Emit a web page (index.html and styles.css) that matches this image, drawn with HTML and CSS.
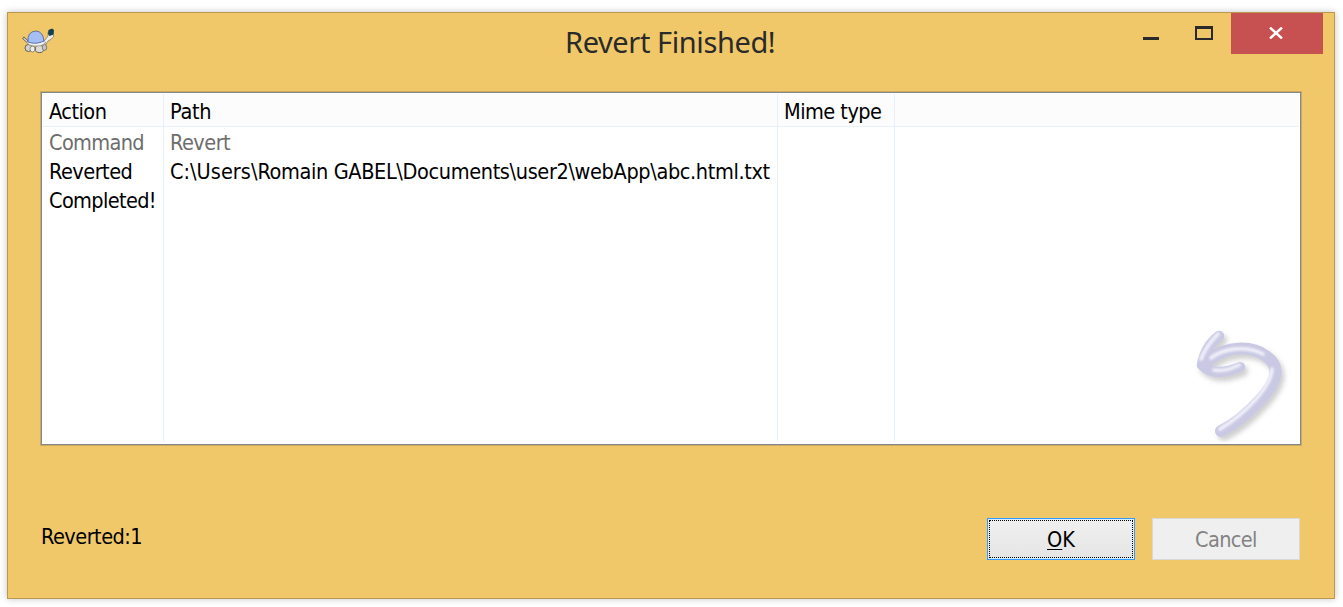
FILE: index.html
```html
<!DOCTYPE html>
<html lang="en">
<head>
<meta charset="utf-8">
<title>Revert Finished!</title>
<link rel="stylesheet" href="styles.css">
</head>
<body>
<main class="window">
  <header class="titlebar">
    <svg class="app-icon" width="34" height="28" viewBox="0 0 34 28">
      <path d="M1 10.500 L7 16" fill="none" stroke="#55524c" stroke-width="2.600"/>
      <path d="M1.500 11 L7 16" fill="none" stroke="#e2e0dc" stroke-width="1.200"/>
      <path d="M20 16 L23 13 L26 9 L26 5 Q29 2 31 4 L31.500 10 L28 13 L26 14 L23 19Z" fill="#ecebe8" stroke="#77736a" stroke-width=".7"/>
      <path d="M26.500 3 L30 1.500 L32 3 L31.500 7.500 L27.500 9 L26 7Z" fill="#153f50"/>
      <ellipse cx="6.500" cy="21" rx="3.500" ry="3.500" fill="#d2d1ce" stroke="#55524c" stroke-width=".9"/>
      <ellipse cx="10.500" cy="22" rx="2.500" ry="3" fill="#f0efec" stroke="#77736a" stroke-width=".8"/>
      <ellipse cx="17.500" cy="22" rx="4.200" ry="3.600" fill="#dddbd7" stroke="#55524c" stroke-width=".9"/>
      <ellipse cx="22.500" cy="20.500" rx="2.200" ry="3" fill="#c6c5c2" stroke="#66635d" stroke-width=".8"/>
      <path d="M4.500 15 Q7 19 12 19 Q19 20 24 16 L21 14 L6 14Z" fill="#f3f2ee" stroke="#77736a" stroke-width=".6"/>
      <path d="M6 15 Q5 4.500 14 4 Q21 4.500 22 14 Q14 18 6 15Z" fill="#a5bef6" stroke="#52699b" stroke-width=".9"/>
    </svg>
    <h1 class="title">Revert Finished!</h1>
    <div class="controls">
      <svg class="control minimize" width="16" height="3"><rect width="16" height="3" fill="#2a2a2a"/></svg>
      <svg class="control maximize" width="18" height="14"><path fill="#2a2a2a" fill-rule="evenodd" d="M0 0H18V14H0ZM2 3V12H16V3Z"/></svg>
      <div class="close"><svg width="14" height="12" viewBox="0 0 14 12"><path d="M1 .5L13 11.500M13 .5L1 11.500" stroke="#fff" stroke-width="2.400"/></svg></div>
    </div>
  </header>
  <section class="list">
    <div class="column">
      <div class="heading"><span class="snug">Action</span></div>
      <div class="cell muted"><span class="tight">Command</span></div>
      <div class="cell"><span class="snug">Reverted</span></div>
      <div class="cell"><span class="tight">Completed!</span></div>
    </div>
    <div class="column">
      <div class="heading">Path</div>
      <div class="cell muted"><span class="snug">Revert</span></div>
      <div class="cell path"><span class="drive">C:\Users\</span>Romain GABEL\Documents\user2\webApp\abc.html.txt</div>
    </div>
    <div class="column"><div class="heading"><span class="snug">Mime type</span></div></div>
    <div class="column rest">
      <div class="heading"></div>
      <svg class="watermark" width="106" height="118" viewBox="0 0 106 118">
        <defs>
          <filter id="shadow" x="-20%" y="-20%" width="150%" height="150%"><feDropShadow dx="3" dy="4" stdDeviation="2.500" flood-color="#777" flood-opacity=".35"/></filter>
          <filter id="soft" x="-20%" y="-20%" width="150%" height="150%"><feGaussianBlur stdDeviation="1.300"/></filter>
        </defs>
        <g fill="none" stroke-linecap="round" stroke-linejoin="round">
          <g stroke="#c9c9e4" filter="url(#shadow)">
            <path d="M28 12Q14 23 11 41Q23 54 49 43" stroke-width="10.500"/>
            <path d="M13 41C30 21 60 21 75 32C92 44 84 60 69 76Q50 97 30 107" stroke-width="12"/>
          </g>
          <g stroke="#f1f1fa" stroke-width="3.600" filter="url(#soft)">
            <path d="M27 10Q15 22 10 35M23 46Q34 48 48 41"/>
            <path d="M20 34C34 23 56 22 72 30M81 45Q81 56 66 74Q48 94 29 105"/>
          </g>
        </g>
      </svg>
    </div>
  </section>
  <footer class="footer">
    <span class="status snug">Reverted:1</span>
    <button class="button ok"><span class="focus"><u>O</u>K</span></button>
    <button class="button cancel tight" disabled>Cancel</button>
  </footer>
</main>
</body>
</html>
```
FILE: styles.css
```css
* { box-sizing: border-box; }
body {
  margin: 0;
  padding: 12px 8px 8px 7px;
  height: 607px;
  overflow: hidden;
  background: #fff;
  color: #000;
  font: 21.500px/29px "DejaVu Sans Condensed", "DejaVu Sans", sans-serif;
  font-stretch: condensed;
  letter-spacing: -.3px;
}
.snug { letter-spacing: -.52px; }
.tight { letter-spacing: -.63px; }
.path { letter-spacing: -.36px; }
.drive { letter-spacing: .02px; }
.window {
  width: 1328px;
  height: 587px;
  border: 1px solid #b9994f;
  background: #f0c869;
  box-shadow: 0 0 7px rgba(0, 0, 0, .23);
  display: flex;
  flex-direction: column;
}
.titlebar {
  height: 78px;
  display: flex;
  padding: 0 11px 0 14px;
}
.app-icon { margin-top: 14px; flex: none; }
.title {
  margin: 9px auto 0 509px;
  font: 400 29px/40px "Noto Sans", sans-serif;
  letter-spacing: -.4px;
  color: #2a2a2a;
  white-space: nowrap;
}
.controls { display: flex; width: 180px; }
.control { flex: none; }
.minimize { margin: 24px 36px 0 0; }
.maximize { margin: 13px 18px 0 0; }
.close {
  width: 92px;
  height: 41px;
  background: #c75050;
  display: flex;
  justify-content: center;
  padding: 14px 2px 0 0;
}
.list {
  margin: 0 32px;
  height: 355px;
  border: 1px solid #cba95d;
  background: #fff;
  box-shadow: inset 0 0 0 1px #828790;
  padding: 2px 2px 3px;
  display: grid;
  grid-template-columns: 121px 614px 117px 1fr;
}
.column { border-right: 1px solid #e5f0fa; white-space: nowrap; }
.rest { border: 0; display: flex; flex-direction: column; justify-content: space-between; }
.heading {
  height: 33px;
  background: #fcfcfc;
  border-bottom: 1px solid #e5f0fa;
  padding: 3px 0 0 6px;
  margin-bottom: 1px;
}
.cell { height: 29px; padding-left: 6px; }
.muted { color: #6d6d6d; }
.watermark { align-self: flex-end; margin-right: 2px; }
.footer {
  margin: 72px 34px 0 33px;
  height: 42px;
  display: flex;
}
.status { margin-right: auto; padding-top: 4px; }
.button {
  width: 148px;
  height: 42px;
  margin: 0;
  padding: 0;
  font: inherit;
}
.ok {
  border: 1px solid #3399ff;
  background: linear-gradient(#f0f0f0, #e5e5e5);
  box-shadow: inset 0 0 0 1px #d9f0fc;
  padding: 1px;
}
.focus { display: block; height: 38px; border: 1px dotted #000; padding-top: 4px; }
.focus u { text-decoration-thickness: 1px; text-underline-offset: 2px; }
.cancel {
  margin-left: 17px;
  border: 1px solid #d9d9d9;
  background: #efefef;
  color: #838383;
}
```
